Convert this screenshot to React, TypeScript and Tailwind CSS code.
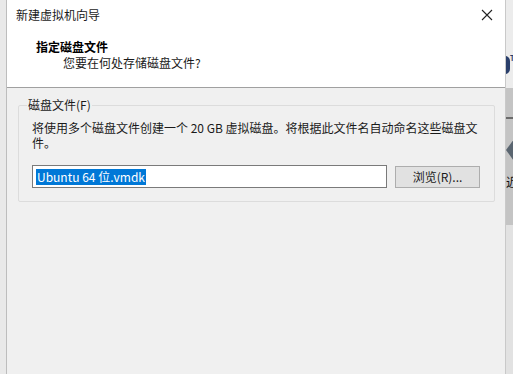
const cjk = "font-['Microsoft_YaHei','Noto_Sans_CJK_SC',sans-serif]";

function CloseIcon() {
  return (
    <svg width="12" height="12" viewBox="0 0 12 12" className="text-[#222]">
      <path d="M1 1 L11 11 M11 1 L1 11" stroke="currentColor" strokeWidth="1.1" />
    </svg>
  );
}

function RightStrip() {
  // the parent VMware window peeking out beside the dialog
  return (
    <div className="w-[8px] flex flex-col border-l border-[#c9c9c9] overflow-hidden">
      <div className="h-[88px] bg-[#ececec] relative">
        <div className="absolute left-[-6px] top-[56px] w-[10px] h-[18px] rounded-full bg-[#2a3f6b]" />
        <div className="absolute left-[4px] top-[55px] text-[7px] leading-none font-bold text-[#2a3f6b]">T</div>
      </div>
      <div className="h-[137px] bg-[#c4c4c4] relative">
        <div className="mt-[29px] h-[2px] bg-[#6b6b6b]" />
        <svg width="8" height="22" viewBox="0 0 8 22" className="mt-[20px]">
          <path d="M8 0 L0 11 L8 22 Z" fill="#5a6570" />
        </svg>
        <div className={`absolute left-[0px] top-[88px] text-[12px] leading-none text-[#111] ${cjk}`}>近</div>
      </div>
      <div className="flex-1 bg-[#e2e2e2]" />
    </div>
  );
}

export default function App() {
  return (
    <div className={`w-[513px] h-[374px] flex overflow-hidden bg-[#e6e6e6] ${cjk}`}>
      {/* Left edge of the window behind */}
      <div className="w-[7px] bg-[#e9e9e9] border-r border-[#bdbdbd]" />

      {/* Wizard dialog */}
      <div className="w-[498px] flex flex-col bg-[#f0f0f0]">
        {/* Title bar */}
        <div className="h-[30px] bg-white flex items-center justify-between pl-[9px] pr-[12px]">
          <span className="text-[12px] leading-none text-[#1a1a1a]">新建虚拟机向导</span>
          <CloseIcon />
        </div>

        {/* Header */}
        <div className="h-[58px] bg-white border-b border-[#a0a0a0] pt-[9px]">
          <div className="pl-[29px] text-[12px] leading-[16px] font-bold text-black">指定磁盘文件</div>
          <div className="pl-[56px] text-[12px] leading-[16px] text-[#1a1a1a]">您要在何处存储磁盘文件?</div>
        </div>

        {/* Body */}
        <div className="pt-[10px] pl-[11px] pr-[10px]">
          <fieldset className="border border-[#dcdcdc] rounded-[2px] h-[104px] pl-[13px] pr-[4px] pt-[8px]">
            <legend className="text-[12px] leading-[14px] text-[#1a1a1a] px-[1px] ml-[-5px]">磁盘文件(F)</legend>
            <p className="text-[12px] leading-[15px] text-[#1a1a1a]">
              将使用多个磁盘文件创建一个 20 GB 虚拟磁盘。将根据此文件名自动命名这些磁盘文件。
            </p>
            <div className="flex items-center gap-[8px] mt-[15px]">
              <div className="w-[355px] h-[23px] bg-white border border-[#7a7a7a] flex items-center pl-[3px]">
                <span className="bg-[#0078d7] text-white text-[12px] leading-[16px] px-[1px]">Ubuntu 64 位.vmdk</span>
              </div>
              <button className="w-[85px] h-[22px] bg-[#e1e1e1] border border-[#adadad] text-[12px] leading-none text-[#1a1a1a] flex items-center justify-center">
                浏览(R)...
              </button>
            </div>
          </fieldset>
        </div>
      </div>

      <RightStrip />
    </div>
  );
}
